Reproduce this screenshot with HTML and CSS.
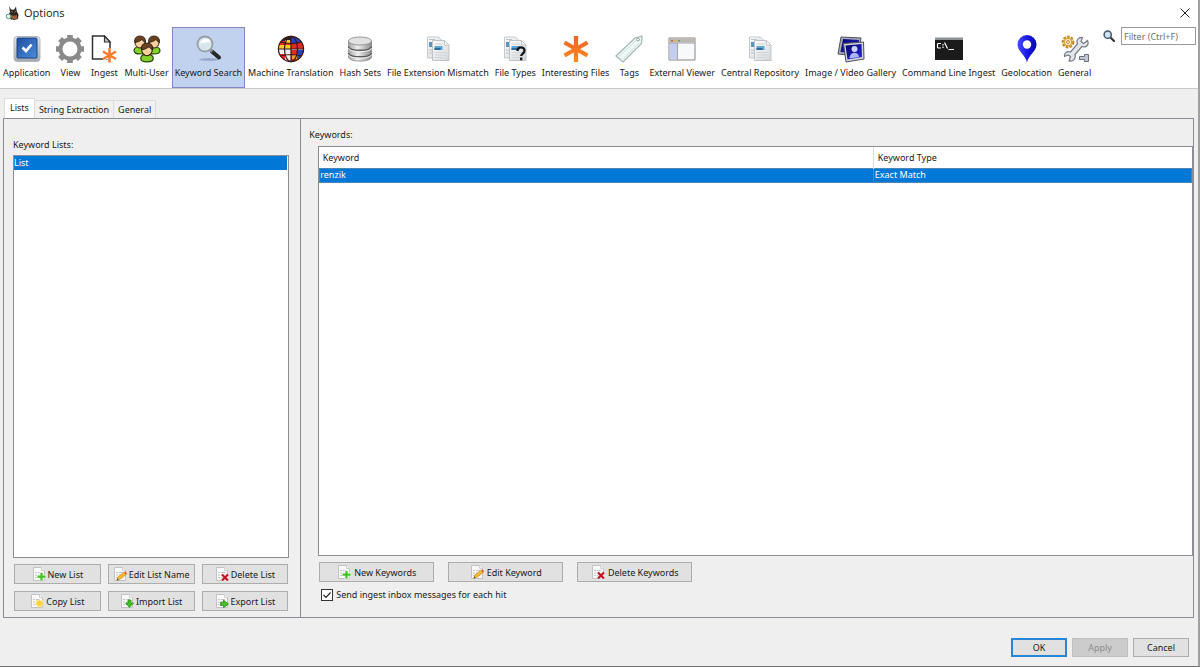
FILE: index.html
```
<!DOCTYPE html>
<html lang="en">
<head>
<meta charset="utf-8">
<title>Options</title>
<link rel="stylesheet" href="styles.css">
</head>
<body>
<svg class="defs" aria-hidden="true">
  <defs>
    <linearGradient id="gBlue" x1="0" y1="0" x2="1" y2="1"><stop offset="0" stop-color="#1d4f9e"/><stop offset="1" stop-color="#4b8ddb"/></linearGradient>
    <linearGradient id="gSilver" x1="0" y1="0" x2="0" y2="1"><stop offset="0" stop-color="#e4e6ea"/><stop offset="1" stop-color="#a3a8b0"/></linearGradient>
    <linearGradient id="gDisk" x1="0" y1="0" x2="1" y2="0"><stop offset="0" stop-color="#a2a2a2"/><stop offset=".4" stop-color="#efefef"/><stop offset="1" stop-color="#8a8a8a"/></linearGradient>
    <linearGradient id="gPage" x1="0" y1="0" x2="1" y2="1"><stop offset="0" stop-color="#fdfdfd"/><stop offset="1" stop-color="#d3d6d8"/></linearGradient>
    <linearGradient id="gPin" x1="0" y1="0" x2="1" y2="0"><stop offset="0" stop-color="#4a50f2"/><stop offset=".5" stop-color="#1a1ae6"/><stop offset="1" stop-color="#0606b0"/></linearGradient>
    <linearGradient id="gOrange" x1="0" y1="0" x2="0" y2="28" gradientUnits="userSpaceOnUse"><stop offset="0" stop-color="#f0622a"/><stop offset="1" stop-color="#ff8a1c"/></linearGradient>
    <linearGradient id="gNight" x1="0" y1="0" x2="1" y2="1"><stop offset="0" stop-color="#05056a"/><stop offset="1" stop-color="#2828d8"/></linearGradient>
    <clipPath id="ball"><circle cx="14" cy="14" r="12.600"/></clipPath>
    <symbol id="pages" viewBox="0 0 28 28">
      <path d="M3.500 2h11l3 3v18h-14z" fill="url(#gPage)" stroke="#c5c9cb"/>
      <path d="M5 7h3v5H5z" fill="#5795bd"/><path d="M5 4.500h6M5 15h3M5 18h3" stroke="#b7c4cc"/>
      <path d="M8.500 5.500h12l4.500 4.500v15.500H8.500z" fill="url(#gPage)" stroke="#c0c4c6"/>
      <path d="M20.500 5.500V10H25z" fill="#fff" stroke="#c0c4c6"/>
      <path d="M10.500 9h8" stroke="#c9d3d9"/><path d="M10.500 11h8v4h-8z" fill="#5fa5d4"/><path d="M10.500 13h6v2h-6z" fill="#2d6da0"/>
      <path d="M10.500 17.500h12M10.500 20h12M10.500 22.500h8" stroke="#cfd6da"/>
    </symbol>
    <symbol id="doc" viewBox="0 0 14 14">
      <path d="M1.500.500h8l3 3v10h-11z" fill="#fafafa" stroke="#c2c2c2"/>
      <path d="M9.500.500v3h3" fill="#fff" stroke="#cfcfcf"/>
      <path d="M3 5.500h2M6 5.500h4M3 8h2M6 8h4M3 10.500h2M6 10.500h4" stroke="#c4c4cc"/>
    </symbol>
    <symbol id="plus" viewBox="0 0 14 14"><use href="#doc"/><path d="M9.500 5.500v8M5.500 9.500h8" stroke="#fff" stroke-width="4"/><path d="M9.500 6v7.500M5.500 9.700h8" stroke="#3cc41f" stroke-width="2.200"/></symbol>
    <symbol id="pencil" viewBox="0 0 14 14"><use href="#doc"/><path d="M4 13l1-3.200 6.200-4.600 2 2.400L7 12.300z" fill="#f5b92e" stroke="#c98312" stroke-width=".6"/><path d="M11.200 5.200l1.200-.9 1.600 2.200-.9 1z" fill="#d9543b"/><path d="M3.600 13.400l.7-1.800 1.300 1.300z" fill="#4b3514"/></symbol>
    <symbol id="cross" viewBox="0 0 14 14"><use href="#doc"/><path d="M7 7.500l6 6m0-6l-6 6" stroke="#fff" stroke-width="3.600"/><path d="M7 7.500l6 6m0-6l-6 6" stroke="#c8101c" stroke-width="2.200"/></symbol>
    <symbol id="spark" viewBox="0 0 14 14"><use href="#doc"/><path d="M9.500 5l1.200 2 2.300-.4-.8 2.200 1.600 1.700-2.300.5-.3 2.400-1.900-1.400-2 1.400-.2-2.400-2.100-.7 1.600-1.700-.7-2.100 2.300.4z" fill="#fbd541" stroke="#ffeb9b" stroke-width=".5"/></symbol>
    <symbol id="down" viewBox="0 0 14 14"><use href="#doc"/><path d="M8 6h3v3h2.500L9.500 13.500 5.500 9H8z" fill="#42c02a" stroke="#23870f" stroke-width=".7"/></symbol>
    <symbol id="right" viewBox="0 0 14 14"><use href="#doc"/><path d="M5.500 8.200h3V6l5 4-5 3.800v-2.300h-3z" fill="#42c02a" stroke="#23870f" stroke-width=".7"/></symbol>
    <symbol id="person" viewBox="0 0 14 20">
      <path d="M1 15.500Q1.500 11.500 7 11.500T13 15.500Q13 19 7 19T1 15.500z" fill="#82d22a" stroke="#2a4a0c" stroke-width="1.200"/>
      <ellipse cx="7" cy="7.500" rx="5" ry="5.500" fill="#f9cfa0" stroke="#2e1c0c" stroke-width="1"/>
      <path d="M1.700 7.500Q1 1 7 1t5.500 6.500Q10.500 6.800 9 4.500 6 7 1.700 7.500z" fill="#6b4323" stroke="#24150a" stroke-width=".8"/>
    </symbol>
  </defs>
</svg>

<main class="window">
  <header class="titlebar">
    <svg class="logo" viewBox="0 0 16 16"><path d="M4 1l2 3.500 3 .3L11 1.500l.7 4.700 1.800 3.300-.5 4.500-4 .9-4.500-1.500L3.500 10 5 7z" fill="#2b2724"/><path d="M6 10l3 .8 2.800-.8.700 3.500-3.500 1L5.800 13z" fill="#9b5d35"/><path d="M6.500 6.500l1.200.7M9.700 7l1-.5" stroke="#c98b58"/><circle cx="3.500" cy="11.500" r="2.300" fill="#e4f3ea" stroke="#52a083"/><path d="M5 13.200l2 1.700" stroke="#437c67"/></svg>
    <h1 class="title">Options</h1>
    <button class="close" aria-label="Close"><svg viewBox="0 0 10 10"><path d="M.5.500l9 9m0-9l-9 9" stroke="#222" fill="none"/></svg></button>
  </header>

  <div class="toolbar">
    <nav class="categories" aria-label="Categories">
      <button class="category"><svg viewBox="0 0 28 28"><rect x="1" y="1.500" width="26" height="25" rx="3" fill="url(#gSilver)" stroke="#b3b7bd"/><rect x="4" y="3" width="20" height="20" rx="1" fill="url(#gBlue)" stroke="#184382"/><path d="M9.500 12.500l3.500 3.500 5.500-6.500" fill="none" stroke="#fff" stroke-width="2.600"/></svg>Application</button>
      <button class="category"><svg viewBox="0 0 28 28"><circle cx="14" cy="14" r="9.500" fill="none" stroke="#8a8a8a" stroke-width="4"/><g stroke="#8a8a8a" stroke-width="5.600"><path d="M14 0v4M14 24v4M0 14h4M24 14h4M4.100 4.100l2.900 2.900M21 21l2.900 2.900M4.100 23.900l2.900-2.900M21 7l2.900-2.900"/></g></svg>View</button>
      <button class="category"><svg viewBox="0 0 28 28"><path d="M2.500 1h12L20 7v17H2.500z" fill="#fff" stroke="#303234" stroke-width="1.500"/><path d="M14.500 1v6H20z" fill="#c9ccd0" stroke="#303234" stroke-width="1.200"/><path d="M19.500 13v14.500M13 16.500l13 7.500M13 24l13-7.500" stroke="#fff" stroke-width="4"/><path d="M19.500 13v14.500M13 16.500l13 7.500M13 24l13-7.500" stroke="#f47b2c" stroke-width="2.500"/></svg>Ingest</button>
      <button class="category"><svg viewBox="0 0 28 28"><use href="#person" x="0" y="0" width="14" height="20"/><use href="#person" x="14" y="0" width="14" height="20"/><use href="#person" x="6" y="7" width="16" height="21"/></svg>Multi-User</button>
      <button class="category category-active" aria-current="page"><svg viewBox="0 0 28 28"><ellipse cx="15" cy="24.500" rx="10" ry="1.500" fill="#98a8ce"/><path d="M18 16.500l7 6" stroke="#282828" stroke-width="4" stroke-linecap="round"/><path d="M15 13.500l3.500 3" stroke="#888d92" stroke-width="3"/><circle cx="11" cy="9" r="7.500" fill="#d7e7ec" stroke="#989fa8" stroke-width="1.800"/><path d="M6 8.500Q7 4 12 4q4 0 4.500 3-5 0-10.500 1.500z" fill="#fff"/></svg>Keyword Search</button>
      <button class="category"><svg viewBox="0 0 28 28"><g clip-path="url(#ball)"><path fill="#f0f0f0" d="M0 0h28v28H0z"/><path fill="#202020" d="M0 0h14v6H0z"/><path fill="#e22b23" d="M0 6h14v4H0zM14 8h14v6H14zM14 15h7v12h-7zM1 19h7v9H1z"/><path fill="#f7ce27" d="M2 10h12v4H2zM8 5h5v4H8z"/><path fill="#2243c4" d="M14 2h14v6H14zM21 15h6v10h-6z"/><path fill="#e9a31e" d="M15 20h5v4h-5z"/></g><g fill="none" stroke="#3c1715" stroke-width="1.200"><circle cx="14" cy="14" r="12.600"/><ellipse cx="14" cy="14" rx="6.500" ry="12.600"/><path d="M14 1v26M1 14h26M3.500 7q10.500 3 21 0M3.500 21q10.500-3 21 0"/></g></svg>Machine Translation</button>
      <button class="category"><svg viewBox="0 0 28 28"><path d="M2.500 6v16c0 5.500 23 5.500 23 0V6z" fill="url(#gDisk)" stroke="#888" stroke-width=".8"/><path d="M2.500 11.500c0 5 23 5 23 0M2.500 18c0 5 23 5 23 0" fill="none" stroke="#5c5c5c" stroke-width="1.400"/><path d="M2.500 13c0 5 23 5 23 0M2.500 19.500c0 5 23 5 23 0" fill="none" stroke="#eee" stroke-width="1"/><ellipse cx="14" cy="6" rx="11.500" ry="4" fill="#e2e2e2" stroke="#999"/></svg>Hash Sets</button>
      <button class="category"><svg><use href="#pages"/></svg>File Extension Mismatch</button>
      <button class="category"><svg viewBox="0 0 28 28"><use href="#pages" width="28" height="28"/><path d="M16.500 16c0-5 7-4.500 7-.5 0 3-3.300 3-3.300 5.500M20.200 22.500v2.700" fill="none" stroke="#161616" stroke-width="2.300"/></svg>File Types</button>
      <button class="category"><svg viewBox="0 0 28 28"><path d="M14 1v26M2.500 7.500l23 13M2.500 20.500l23-13" stroke="url(#gOrange)" stroke-width="4.300"/></svg>Interesting Files</button>
      <button class="category"><svg viewBox="0 0 28 28"><path d="M1 21L20 3l7-2-.5 7.500L8 27z" fill="#eef7f5" stroke="#a4b5b3" stroke-width="1.200"/><path d="M4 21.500L21.500 5M8 24L24.500 7.500" stroke="#d2e4e2"/><circle cx="23" cy="4.500" r="1.400" fill="#fff" stroke="#8e9f9d"/></svg>Tags</button>
      <button class="category"><svg viewBox="0 0 28 28"><path d="M1 3h26v22H1z" fill="#f8f9fb" stroke="#8a8684"/><path d="M1.500 3.500h25v4h-25z" fill="#bdb7b2"/><path d="M1.500 8h8v16.500h-8z" fill="#c2cdf0"/><path d="M9.500 8v16.500M1 8h26" stroke="#a3a3a8"/><path d="M3 5h2v1.500H3z" fill="#da5542"/><path d="M6.500 5h2v1.500h-2z" fill="#d7bd3d"/><path d="M10 5h2v1.500h-2z" fill="#5da84e"/></svg>External Viewer</button>
      <button class="category"><svg><use href="#pages"/></svg>Central Repository</button>
      <button class="category"><svg viewBox="0 0 28 28"><path d="M4 2l20 1-3 18-20-2z" fill="#a9abba" stroke="#4c4e5d"/><path d="M6 4l16 1-2 14L3.500 17z" fill="url(#gNight)"/><path d="M6.500 8.500L26.500 7 27 24 9 27z" fill="#d4d5dc" stroke="#4c4e5d"/><path d="M8.500 10.500l16-1.500.5 13-14.500 2.500z" fill="url(#gNight)"/><circle cx="17.500" cy="14" r="3" fill="#cfd3ff"/><path d="M12.500 23.500c0-7 9-7.500 9.500-1.500z" fill="#aeb4ff"/></svg>Image / Video Gallery</button>
      <button class="category"><svg viewBox="0 0 28 28"><path d="M0 3h28v22H0z" fill="#1b1b1b"/><path d="M0 2.500h28v2.500H0z" fill="#8d9194"/><path d="M6 8.500H3.500q-1 0-1 1v2.500q0 1 1 1H6M8 9v1.500M8 11.500v1.500M9.500 7.500l3 6M13.500 14.500h5.500" fill="none" stroke="#fff" stroke-width="1.200"/></svg>Command Line Ingest</button>
      <button class="category"><svg viewBox="0 0 28 28"><path d="M14 27.500C12.500 20 4.500 16.500 4.500 9.500a9.500 9.500 0 0 1 19 0C23.500 16.500 15.500 20 14 27.500z" fill="url(#gPin)"/><circle cx="14" cy="9.500" r="4.200" fill="#fff"/></svg>Geolocation</button>
      <button class="category"><svg viewBox="0 0 28 28"><circle cx="7" cy="7" r="5.300" fill="#f7dfa5" stroke="#c98a24" stroke-width="2.200" stroke-dasharray="2.600 1.300"/><circle cx="7" cy="7" r="3.800" fill="#fae7b7" stroke="#d39a3b"/><circle cx="7" cy="7" r="1.400" fill="#fff" stroke="#c98a24"/><path d="M26.500 5.500l-4 3-2.500-2 1.500-4c-4.500-.5-6.500 3-5 6.500l-7 8c-3.500-1.500-6.500 1-6 4.500l3.500-1.500 2.500 1.500-1.500 4.500c4.500 1 7-2.500 6-6.500l7-8c4 1.500 7.500-1.500 5.500-6z" fill="#e3e7ec" stroke="#737a84" stroke-width="1.200"/><path d="M18.500 21.500h5v-2h4v7h-4v-2h-5z" fill="#c2c9d4" stroke="#69717d"/></svg>General</button>
    </nav>
    <div class="filter">
      <svg viewBox="0 0 12 12"><path d="M7 7l4 4" stroke="#2b3440" stroke-width="2.200" stroke-linecap="round"/><circle cx="4.700" cy="4.700" r="3.600" fill="#cfe2f1" stroke="#44586c" stroke-width="1.500"/></svg>
      <input class="filter-input" type="text" placeholder="Filter (Ctrl+F)" aria-label="Filter">
    </div>
  </div>

  <div class="content">
    <div class="tabs" role="tablist">
      <button class="tab tab-active" role="tab" aria-selected="true">Lists</button>
      <button class="tab" role="tab" aria-selected="false">String Extraction</button>
      <button class="tab" role="tab" aria-selected="false">General</button>
    </div>
    <div class="split">
      <section class="lists">
        <h2 class="label" id="lists-label">Keyword Lists:</h2>
        <ul class="listbox" role="listbox" aria-labelledby="lists-label">
          <li class="option" role="option" aria-selected="true">List</li>
        </ul>
        <div class="list-actions">
          <button class="button"><svg><use href="#plus"/></svg>New List</button>
          <button class="button"><svg><use href="#pencil"/></svg>Edit List Name</button>
          <button class="button"><svg><use href="#cross"/></svg>Delete List</button>
          <button class="button"><svg><use href="#spark"/></svg>Copy List</button>
          <button class="button"><svg><use href="#down"/></svg>Import List</button>
          <button class="button"><svg><use href="#right"/></svg>Export List</button>
        </div>
      </section>
      <section class="keywords">
        <h2 class="label">Keywords:</h2>
        <div class="keywords-body">
          <div class="table-box">
            <table class="table">
              <thead><tr><th class="col-keyword">Keyword</th><th>Keyword Type</th></tr></thead>
              <tbody><tr><td>renzik</td><td>Exact Match</td></tr></tbody>
            </table>
          </div>
          <div class="keyword-actions">
            <button class="button button-wide"><svg><use href="#plus"/></svg>New Keywords</button>
            <button class="button button-wide"><svg><use href="#pencil"/></svg>Edit Keyword</button>
            <button class="button button-wide"><svg><use href="#cross"/></svg>Delete Keywords</button>
          </div>
          <label class="check">
            <span class="check-box">
              <input type="checkbox" checked>
              <svg class="check-mark" viewBox="0 0 12 12"><path d="M2.500 6l2.500 2.500L9.500 3.500" fill="none" stroke="#222" stroke-width="1.200"/></svg>
            </span>
            Send ingest inbox messages for each hit
          </label>
        </div>
      </section>
    </div>
    <footer class="footer">
      <button class="button button-primary">OK</button>
      <button class="button" disabled>Apply</button>
      <button class="button">Cancel</button>
    </footer>
  </div>
</main>
</body>
</html>
```
FILE: styles.css
```
* { box-sizing: border-box; }
body {
  margin: 0;
  background: #efefef;
  color: #1a1a1a;
  font: 9px/13px "Noto Sans", "Open Sans", sans-serif;
}
button, input, table { font: inherit; color: inherit; }
h1, h2, ul { margin: 0; padding: 0; font: inherit; list-style: none; }
svg { display: block; flex: none; }
.defs { position: absolute; width: 0; height: 0; }

.window {
  display: flex;
  flex-direction: column;
  min-height: 100vh;
  border-right: 2px solid #a0a0a0;
  border-bottom: 1px solid #707070;
}

.titlebar {
  display: flex;
  align-items: center;
  gap: 3px;
  height: 26px;
  padding: 0 8px 0 5px;
  background: #fff;
}
.logo { width: 16px; height: 16px; }
.title { flex: 1; font: 11px/16px "Open Sans", "Noto Sans", sans-serif; }
.close { padding: 0; border: 0; background: none; }
.close svg { width: 10px; height: 10px; }

.toolbar {
  display: flex;
  align-items: flex-start;
  justify-content: space-between;
  padding: 1px 2px 0 0;
  border-bottom: 1px solid #c8c8c8;
  background: #fff;
}
.categories { display: flex; }
.category {
  display: flex;
  flex-direction: column;
  align-items: center;
  gap: 3px;
  min-width: 34px;
  height: 61px;
  padding: 7px 2px 0;
  border: 1px solid transparent;
  background: none;
  white-space: nowrap;
}
.category svg { width: 28px; height: 28px; }
.category-active { border-color: #8884c4; background: #c1d2ee; }
.filter { display: flex; align-items: center; gap: 6px; }
.filter svg { width: 12px; height: 12px; }
.filter-input {
  width: 75px;
  height: 18px;
  padding: 0 2px;
  border: 1px solid #9a9a9a;
  background: #fff;
}
.filter-input::placeholder { color: #707070; }

.content {
  display: flex;
  flex: 1;
  flex-direction: column;
  padding: 9px 4px 9px 3px;
}
.tabs { display: flex; align-items: flex-end; padding-left: 1px; }
.tab {
  height: 18px;
  padding: 0 4px 1px;
  border: 1px solid #dcdcdc;
  border-width: 1px 1px 0 0;
  background: #f1f1f1;
}
.tab-active { height: 20px; padding: 0 5px 3px; border-left-width: 1px; background: #fff; }

.split {
  display: grid;
  flex: 1;
  grid-template-columns: minmax(0, 1fr) minmax(0, 3fr);
  border: 1px solid #8a8d94;
}
.lists {
  display: flex;
  flex-direction: column;
  padding: 19px 11px 6px 9px;
  border-right: 1px solid #8a8d94;
}
.listbox {
  flex: 1;
  margin: 4px 0 6px;
  padding-right: 1px;
  border: 1px solid #8a8d94;
  background: #fff;
}
.option { height: 14px; background: #0078d7; color: #fff; }
.list-actions {
  display: grid;
  grid-template-columns: repeat(3, 1fr);
  gap: 7px;
  padding: 0 1px;
}
.button {
  display: flex;
  align-items: center;
  justify-content: center;
  gap: 2px;
  height: 20px;
  padding: 0;
  border: 1px solid #adadad;
  background: #e1e1e1;
  white-space: nowrap;
}
.button svg { width: 14px; height: 14px; }
.button-wide { flex: 0 1 115px; gap: 3px; }

.keywords { display: flex; flex-direction: column; padding: 9px 0 16px 8px; }
.keywords-body { display: flex; flex: 1; flex-direction: column; margin-top: 5px; padding-left: 9px; }
.table-box { flex: 1; border: 1px solid #8a8d94; background: #fff; }
.table { width: 100%; border-collapse: collapse; }
.table th { height: 21px; padding: 0 4px; border-left: 1px solid #dcdcdc; font-weight: 400; text-align: left; }
.table th:first-child { border-left: 0; padding-left: 3px; }
.table td { height: 14px; padding: 0 1px; border: 1px solid #4a86b8; background: #0078d7; color: #fff; line-height: 12px; }
.table td:first-child { padding-left: 0; }
.table .col-keyword { width: 63.5%; }
.keyword-actions { display: flex; gap: 14px; margin: 6px 0 6px 1px; }
.check { display: flex; align-items: center; gap: 3px; margin-left: 3px; }
.check-box { display: grid; }
.check-box > * { grid-area: 1 / 1; width: 12px; height: 12px; }
.check input {
  margin: 0;
  border: 1px solid #333;
  appearance: none;
  background: #fff;
}
.check-mark { visibility: hidden; pointer-events: none; }
.check input:checked + .check-mark { visibility: visible; }
.footer { display: flex; justify-content: flex-end; gap: 5px; padding: 20px 5px 0 0; }
.footer .button { flex: 0 0 56px; height: 19px; }
.footer .button-primary { border: 2px solid #2a84d8; }
.footer .button:disabled { border-color: #bfbfbf; background: #ccc; color: #8c8c8c; }
```
